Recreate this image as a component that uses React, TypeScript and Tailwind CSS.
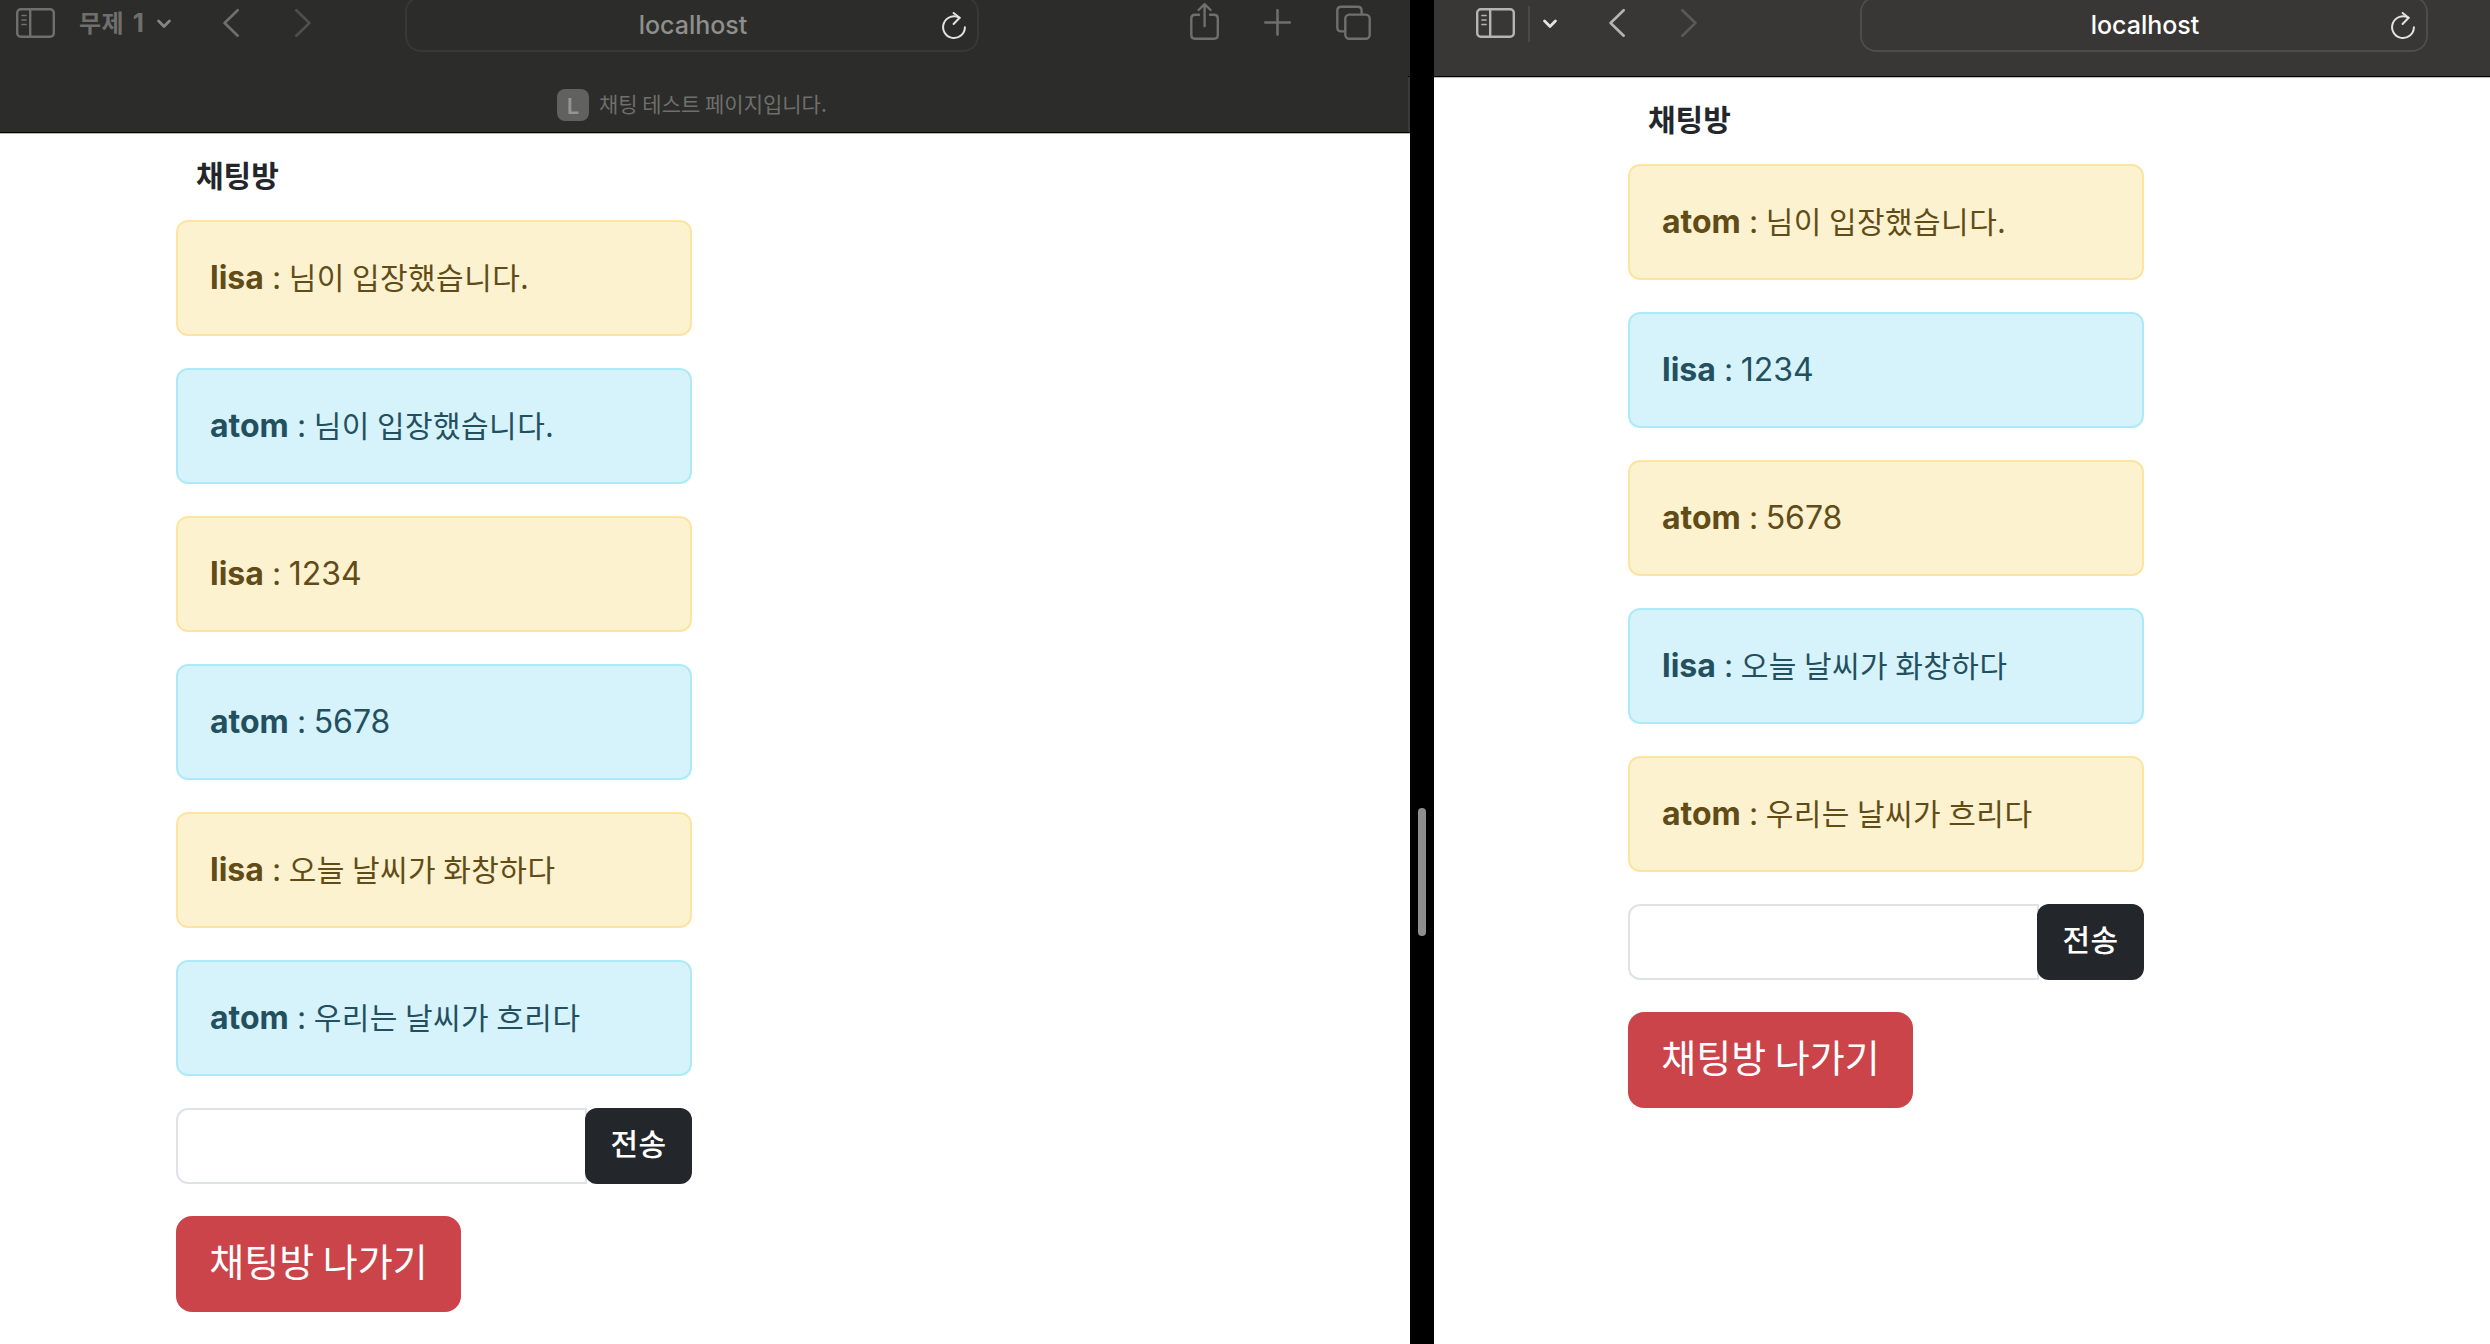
import React from 'react';

type Tone = 'yellow' | 'blue';
type Message = { name: string; text: string; tone: Tone };

const lisaRoom: Message[] = [
  { name: 'lisa', text: '님이 입장했습니다.', tone: 'yellow' },
  { name: 'atom', text: '님이 입장했습니다.', tone: 'blue' },
  { name: 'lisa', text: '1234', tone: 'yellow' },
  { name: 'atom', text: '5678', tone: 'blue' },
  { name: 'lisa', text: '오늘 날씨가 화창하다', tone: 'yellow' },
  { name: 'atom', text: '우리는 날씨가 흐리다', tone: 'blue' },
];

const atomRoom: Message[] = [
  { name: 'atom', text: '님이 입장했습니다.', tone: 'yellow' },
  { name: 'lisa', text: '1234', tone: 'blue' },
  { name: 'atom', text: '5678', tone: 'yellow' },
  { name: 'lisa', text: '오늘 날씨가 화창하다', tone: 'blue' },
  { name: 'atom', text: '우리는 날씨가 흐리다', tone: 'yellow' },
];

const tones: Record<Tone, string> = {
  yellow: 'bg-[#fdf2d0] border-[#fbe5a1] text-[#614c17]',
  blue: 'bg-[#d6f3fb] border-[#aee9f8] text-[#23505f]',
};

/* Toolbar icons share a 56px tall canvas whose top is the window's edge. */
function Icon({ w, className = '', sw = 2.4, children }: { w: number; className?: string; sw?: number; children: React.ReactNode }) {
  return (
    <svg
      width={w}
      height={56}
      viewBox={`0 0 ${w} 56`}
      fill="none"
      stroke="currentColor"
      strokeWidth={sw}
      strokeLinecap="round"
      strokeLinejoin="round"
      className={`shrink-0 ${className}`}
    >
      {children}
    </svg>
  );
}

const SidebarIcon = ({ className }: { className: string }) => (
  <Icon w={39} className={className}>
    <rect x="1.2" y="9.2" width="36.6" height="27.6" rx="3.6" />
    <path d="M14.2 9.2V36.8" />
    <path d="M6 15.5H10M6 20H10M6 24.5H10" strokeWidth="1.7" />
  </Icon>
);

const ChevronDown = ({ className }: { className: string }) => (
  <Icon w={14} sw={2.8} className={className}>
    <path d="M1.6 21L7 26.4L12.4 21" />
  </Icon>
);

const Back = ({ className }: { className: string }) => (
  <Icon w={16} sw={2.6} className={className}>
    <path d="M14.7 10.2L1.6 23L14.7 35.7" />
  </Icon>
);

const Forward = ({ className }: { className: string }) => (
  <Icon w={16} sw={2.6} className={className}>
    <path d="M1.3 10.2L14.4 23L1.3 35.7" />
  </Icon>
);

const Reload = () => (
  <svg width="24" height="28" viewBox="0 0 24 28" fill="none" stroke="#e3e2e0" strokeWidth="2" strokeLinecap="round" strokeLinejoin="round">
    <path d="M22.9 15.2A10.9 10.9 0 1 1 17.6 5.8" />
    <path d="M11.6 1L17.6 5.8L11.6 12" />
  </svg>
);

function AddressBar({ className, reloadClass }: { className: string; reloadClass: string }) {
  return (
    <div className={`-mt-1 grid h-14 shrink-0 grid-cols-[1fr_auto_1fr] items-center rounded-2xl border-2 ${className}`}>
      <span />
      <span className="pt-0.5 pl-0.5 text-[25px] leading-[30px] font-medium">localhost</span>
      <span className={`justify-self-end ${reloadClass}`}>
        <Reload />
      </span>
    </div>
  );
}

function ChatRoom({ messages }: { messages: Message[] }) {
  return (
    <div className="w-[516px]">
      <h6 className="pt-[18px] pb-5 pl-5 text-[30px] leading-[48px] font-bold text-[#23262a]">채팅방</h6>
      <div className="flex flex-col gap-8">
        {messages.map((m, i) => (
          <div key={i} className={`flex h-[116px] items-baseline rounded-xl border-2 px-8 pt-8 text-[32px] leading-[48px] ${tones[m.tone]}`}>
            <b className="font-bold">{m.name}</b>
            <span className="tracking-[-0.8px] whitespace-pre"> : </span>
            {/^\d+$/.test(m.text) ? (
              <span>{m.text}</span>
            ) : (
              <span className="font-['Noto_Sans_CJK_KR',sans-serif] text-[30px] leading-[44px] tracking-[0.45px]">{m.text}</span>
            )}
          </div>
        ))}
        <div className="flex h-[76px]">
          <div className="-mr-0.5 flex-1 rounded-l-xl border-2 border-[#dfe2e6] bg-white" />
          <button className="relative w-[107px] rounded-xl bg-[#23262a] pb-[3px] text-[30px] font-medium tracking-[0.5px] text-white">전송</button>
        </div>
        <button className="h-24 w-[285px] rounded-2xl bg-[#ca444a] pb-[9px] font-['Noto_Sans_CJK_KR',sans-serif] text-[38px] text-white">
          채팅방 나가기
        </button>
      </div>
    </div>
  );
}

function LeftWindow() {
  return (
    <section className="flex w-[1410px] shrink-0 flex-col bg-white">
      <header className="flex h-[134px] shrink-0 border-b border-[#b9b9b6] bg-[#2c2c2a]">
        <div className="flex w-[1408px] shrink-0 flex-col border-b border-black">
          <div className="flex h-[76px] items-start pl-4 text-[#6f6f6d]">
            <SidebarIcon className="" />
            <span className="mt-[5px] ml-6 w-[78px] text-2xl leading-9 font-bold tracking-[0.3px] whitespace-nowrap">
              무제<span className="ml-[9px] text-[26px]">1</span>
            </span>
            <ChevronDown className="text-[#858583]" />
            <Back className="ml-[52px]" />
            <Forward className="ml-14 text-[#4f4f4d]" />
            <AddressBar className="ml-[94px] w-[574px] border-[#383836] text-[#8f8f8d]" reloadClass="mr-[11px] mt-[3px]" />
            <Icon w={30} className="ml-[211px]">
              <path d="M9 14.8H5Q1.3 14.8 1.3 18.5V35Q1.3 38.7 5 38.7H24Q27.8 38.7 27.8 35V18.5Q27.8 14.8 24 14.8H20" />
              <path d="M14.6 26V4.5M8.6 10L14.6 4.2L20.6 10" />
            </Icon>
            <Icon w={28} sw={2.6} className="ml-11">
              <path d="M13.5 10.2V34.6M1.3 22.5H25.8" />
            </Icon>
            <Icon w={36} className="ml-11">
              <rect x="9.3" y="14.6" width="24.4" height="24.1" rx="4" />
              <path d="M8.8 31.4H5.2Q1.3 31.4 1.3 27.5V10.6Q1.3 6.7 5.2 6.7H21.7Q25.6 6.7 25.6 10.6V14" />
            </Icon>
          </div>
          <div className="flex h-14 items-start pt-[13px] pl-[557px]">
            <span className="flex h-8 w-8 items-center justify-center rounded-lg bg-[#616160] pt-0.5 text-[22px] font-semibold text-[#949492]">L</span>
            <span className="ml-2.5 font-['Noto_Sans_CJK_KR',sans-serif] text-[21px] leading-[29px] whitespace-nowrap text-[#6f6f6d]">
              채팅 테스트 페이지입니다.
            </span>
          </div>
        </div>
        <div className="mt-[76px] w-0.5 border-y border-black bg-[#3a3a38]" />
      </header>
      <div className="pl-44">
        <ChatRoom messages={lisaRoom} />
      </div>
    </section>
  );
}

function RightWindow() {
  return (
    <section className="flex flex-1 flex-col bg-white">
      <header className="h-[78px] shrink-0 border-b border-[#bdbcba] bg-[#393735]">
        <div className="flex h-[77px] items-start border-b border-black pl-[42px] text-[#b5b4b2]">
          <SidebarIcon className="" />
          <span className="mt-1.5 ml-[13px] h-9 w-0.5 bg-[#4b4947]" />
          <ChevronDown className="ml-[13px] text-[#e5e4e2]" />
          <Back className="ml-[52px]" />
          <Forward className="ml-14 text-[#5b5957]" />
          <AddressBar className="ml-[163px] w-[568px] border-[#4e4c4a] text-white" reloadClass="mr-[11px] mt-[3px]" />
        </div>
      </header>
      <div className="pl-[194px]">
        <ChatRoom messages={atomRoom} />
      </div>
    </section>
  );
}

export default function App() {
  return (
    <main className="flex h-[1344px] w-[2490px] overflow-hidden bg-black font-['Inter','Noto_Sans_CJK_KR',sans-serif]">
      <LeftWindow />
      <div className="flex w-6 shrink-0 justify-center pt-[808px]">
        <div className="h-32 w-2 rounded-full bg-[#8e8e8e]" />
      </div>
      <RightWindow />
    </main>
  );
}
